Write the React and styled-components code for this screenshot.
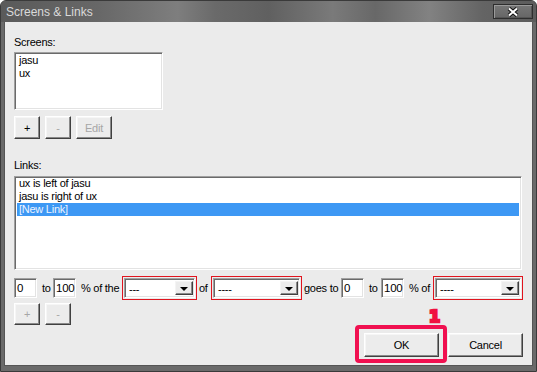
import React from 'react'
import styled, { createGlobalStyle } from 'styled-components'

const GlobalStyle = createGlobalStyle`
  html, body {
    margin: 0;
    padding: 0;
    background: #ffffff;
  }
  body {
    font-family: "Liberation Sans", Arial, sans-serif;
    font-size: 11px;
    letter-spacing: -0.25px;
    color: #000;
  }
`

const Window = styled.div`
  position: relative;
  width: 537px;
  height: 372px;
  box-sizing: border-box;
  display: flex;
  flex-direction: column;
  background: #6a6a6a;
  border: 1px solid #3a3a3a;
  border-radius: 6px 6px 0 0;
  overflow: hidden;
`

const TitleBar = styled.div`
  height: 21px;
  flex: none;
  display: flex;
  align-items: center;
  justify-content: space-between;
  padding: 0 3px 0 5px;
  background: linear-gradient(90deg, #5a5a5a 0%, #676767 18%, #7e7e7e 33%, #6a6a6a 40%, #606060 50%, #7a7a7a 62%, #686868 70%, #828282 80%, #646464 90%, #5c5c5c 100%);
  color: #dadada;
  font-size: 12px;
  letter-spacing: 0;
`

const CloseButton = styled.div`
  width: 38px;
  height: 13px;
  display: flex;
  align-items: center;
  justify-content: center;
  border: 1px solid #2e2e2e;
  box-shadow: inset 1px 1px #9a9a9a, inset -1px -1px #555;
  background: linear-gradient(#777, #666);
`

const Body = styled.div`
  position: relative;
  flex: 1;
  margin: 0 3px 5px 3px;
  background: #ebebeb;
  border-left: 1px solid #555;
  border-right: 1px solid #555;
  border-bottom: 1px solid #555;
  padding: 13px 8px 0 9px;
  display: flex;
  flex-direction: column;
  align-items: flex-start;
`

const Caption = styled.div`
  line-height: 14px;
  margin-top: ${p => p.$mt || 0}px;
  margin-bottom: ${p => p.$mb || 0}px;
`

const ListBox = styled.div`
  box-sizing: border-box;
  width: ${p => p.$w}px;
  height: ${p => p.$h}px;
  background: #fff;
  border: 1px solid;
  border-color: #a0a0a0 #ffffff #ffffff #a0a0a0;
  box-shadow: inset 1px 1px #6a6a6a, inset -1px -1px #e3e3e3;
  padding: ${p => p.$pt}px 2px 0;
`

const ListItem = styled.div`
  line-height: 13px;
  padding-left: 2px;
  white-space: nowrap;
  background: ${p => (p.$selected ? '#3d98f4' : 'transparent')};
  color: ${p => (p.$selected ? '#eef4ff' : '#000')};
`

const ButtonRow = styled.div`
  display: flex;
  gap: 5px;
  margin-top: ${p => p.$mt || 0}px;
`

const Button = styled.button`
  box-sizing: border-box;
  width: ${p => p.$w}px;
  height: ${p => p.$h || 23}px;
  padding: 0;
  margin: 0;
  margin-top: ${p => p.$mt || 0}px;
  font-family: inherit;
  font-size: 11px;
  letter-spacing: inherit;
  background: #ececec;
  color: ${p => (p.disabled ? '#a6a6a6' : '#000')};
  border: 1px solid;
  border-color: #ffffff #404040 #404040 #ffffff;
  box-shadow: inset -1px -1px #8a8a8a, inset 1px 1px #f6f6f6;
`

const ControlRow = styled.div`
  display: flex;
  align-items: center;
  height: 24px;
  margin-top: 6px;
`

const Field = styled.div`
  box-sizing: border-box;
  width: 23px;
  height: 20px;
  background: #fff;
  border: 1px solid;
  border-color: #a0a0a0 #ffffff #ffffff #a0a0a0;
  box-shadow: inset 1px 1px #6a6a6a, inset -1px -1px #e3e3e3;
  padding: 0 2px;
  line-height: 18px;
  font-size: 11.5px;
`

const Text = styled.span`
  box-sizing: border-box;
  width: ${p => p.$w}px;
  padding-left: ${p => p.$pl}px;
  white-space: nowrap;
  font-size: 11px;
`

const RedFrame = styled.div`
  box-sizing: border-box;
  width: ${p => p.$w}px;
  height: 24px;
  border: 1px solid #e0141e;
  padding: 1px;
`

const Select = styled.div`
  box-sizing: border-box;
  height: 20px;
  display: flex;
  background: #fff;
  border: 1px solid;
  border-color: #a0a0a0 #ffffff #ffffff #a0a0a0;
  box-shadow: inset 1px 1px #6a6a6a, inset -1px -1px #e3e3e3;
  padding: 2px 1px 2px 2px;
`

const SelectValue = styled.div`
  flex: 1;
  line-height: 16px;
  padding-left: 2px;
`

const Arrow = styled.div`
  box-sizing: border-box;
  width: 18px;
  display: flex;
  align-items: center;
  justify-content: center;
  background: #ececec;
  border: 1px solid;
  border-color: #f4f4f4 #404040 #404040 #f4f4f4;
  box-shadow: inset -1px -1px #8a8a8a;

  &::after {
    content: '';
    border-left: 4px solid transparent;
    border-right: 4px solid transparent;
    border-top: 4px solid #000;
    margin-top: 1px;
  }
`

const Footer = styled.div`
  align-self: stretch;
  display: flex;
  justify-content: flex-end;
  align-items: flex-start;
  gap: 1px;
  padding-right: 1px;
`

const Highlight = styled.div`
  border: 4px solid #f01050;
  border-radius: 4px;
  padding: 4px 4px 2px 5px;
`

const Marker = styled.div`
  position: absolute;
  left: 424px;
  top: 287px;
  color: #f01040;
  font-family: "DejaVu Sans", sans-serif;
  font-weight: 900;
  font-size: 16px;
  line-height: 16px;
  -webkit-text-stroke: 2.5px #f01040;
  letter-spacing: 0;
`

const Dropdown = ({ width, value }) => (
  <RedFrame $w={width}>
    <Select>
      <SelectValue>{value}</SelectValue>
      <Arrow />
    </Select>
  </RedFrame>
)

const App = () => {
  const links = ['ux is left of jasu', 'jasu is right of ux', '[New Link]']

  return (
    <>
      <GlobalStyle />
      <Window>
        <TitleBar>
          <span>Screens &amp; Links</span>
          <CloseButton>
            <svg width="14" height="10" viewBox="0 0 14 10">
              <path d="M3 1.5 L11 8.5 M11 1.5 L3 8.5" stroke="#111" strokeWidth="4" />
              <path d="M3 1.5 L11 8.5 M11 1.5 L3 8.5" stroke="#fff" strokeWidth="2" />
            </svg>
          </CloseButton>
        </TitleBar>
        <Body>
          <Caption $mb={3}>Screens:</Caption>
          <ListBox $w={149} $h={58} $pt={1}>
            <ListItem>jasu</ListItem>
            <ListItem>ux</ListItem>
          </ListBox>
          <ButtonRow $mt={6}>
            <Button $w={26}>+</Button>
            <Button $w={26} disabled>-</Button>
            <Button $w={36} disabled>Edit</Button>
          </ButtonRow>

          <Caption $mt={19} $mb={4}>Links:</Caption>
          <ListBox $w={508} $h={94} $pt={0}>
            {links.map((l, i) => (
              <ListItem key={l} $selected={i === 2}>{l}</ListItem>
            ))}
          </ListBox>

          <ControlRow>
            <Field>0</Field>
            <Text $w={16} $pl={5}>to</Text>
            <Field>100</Field>
            <Text $w={46} $pl={5}>% of the</Text>
            <Dropdown width={75} value="---" />
            <Text $w={14} $pl={2}>of</Text>
            <Dropdown width={91} value="----" />
            <Text $w={39} $pl={2}>goes to</Text>
            <Field>0</Field>
            <Text $w={17} $pl={5}>to</Text>
            <Field>100</Field>
            <Text $w={29} $pl={5}>% of</Text>
            <Dropdown width={90} value="----" />
          </ControlRow>

          <ButtonRow $mt={3}>
            <Button $w={26} $h={22} disabled>+</Button>
            <Button $w={26} $h={22} disabled>-</Button>
          </ButtonRow>

          <Footer>
            <Highlight>
              <Button $w={75} $h={24}>OK</Button>
            </Highlight>
            <Button $w={75} $h={24} $mt={8}>Cancel</Button>
          </Footer>

          <Marker>1</Marker>
        </Body>
      </Window>
    </>
  )
}

export default App
